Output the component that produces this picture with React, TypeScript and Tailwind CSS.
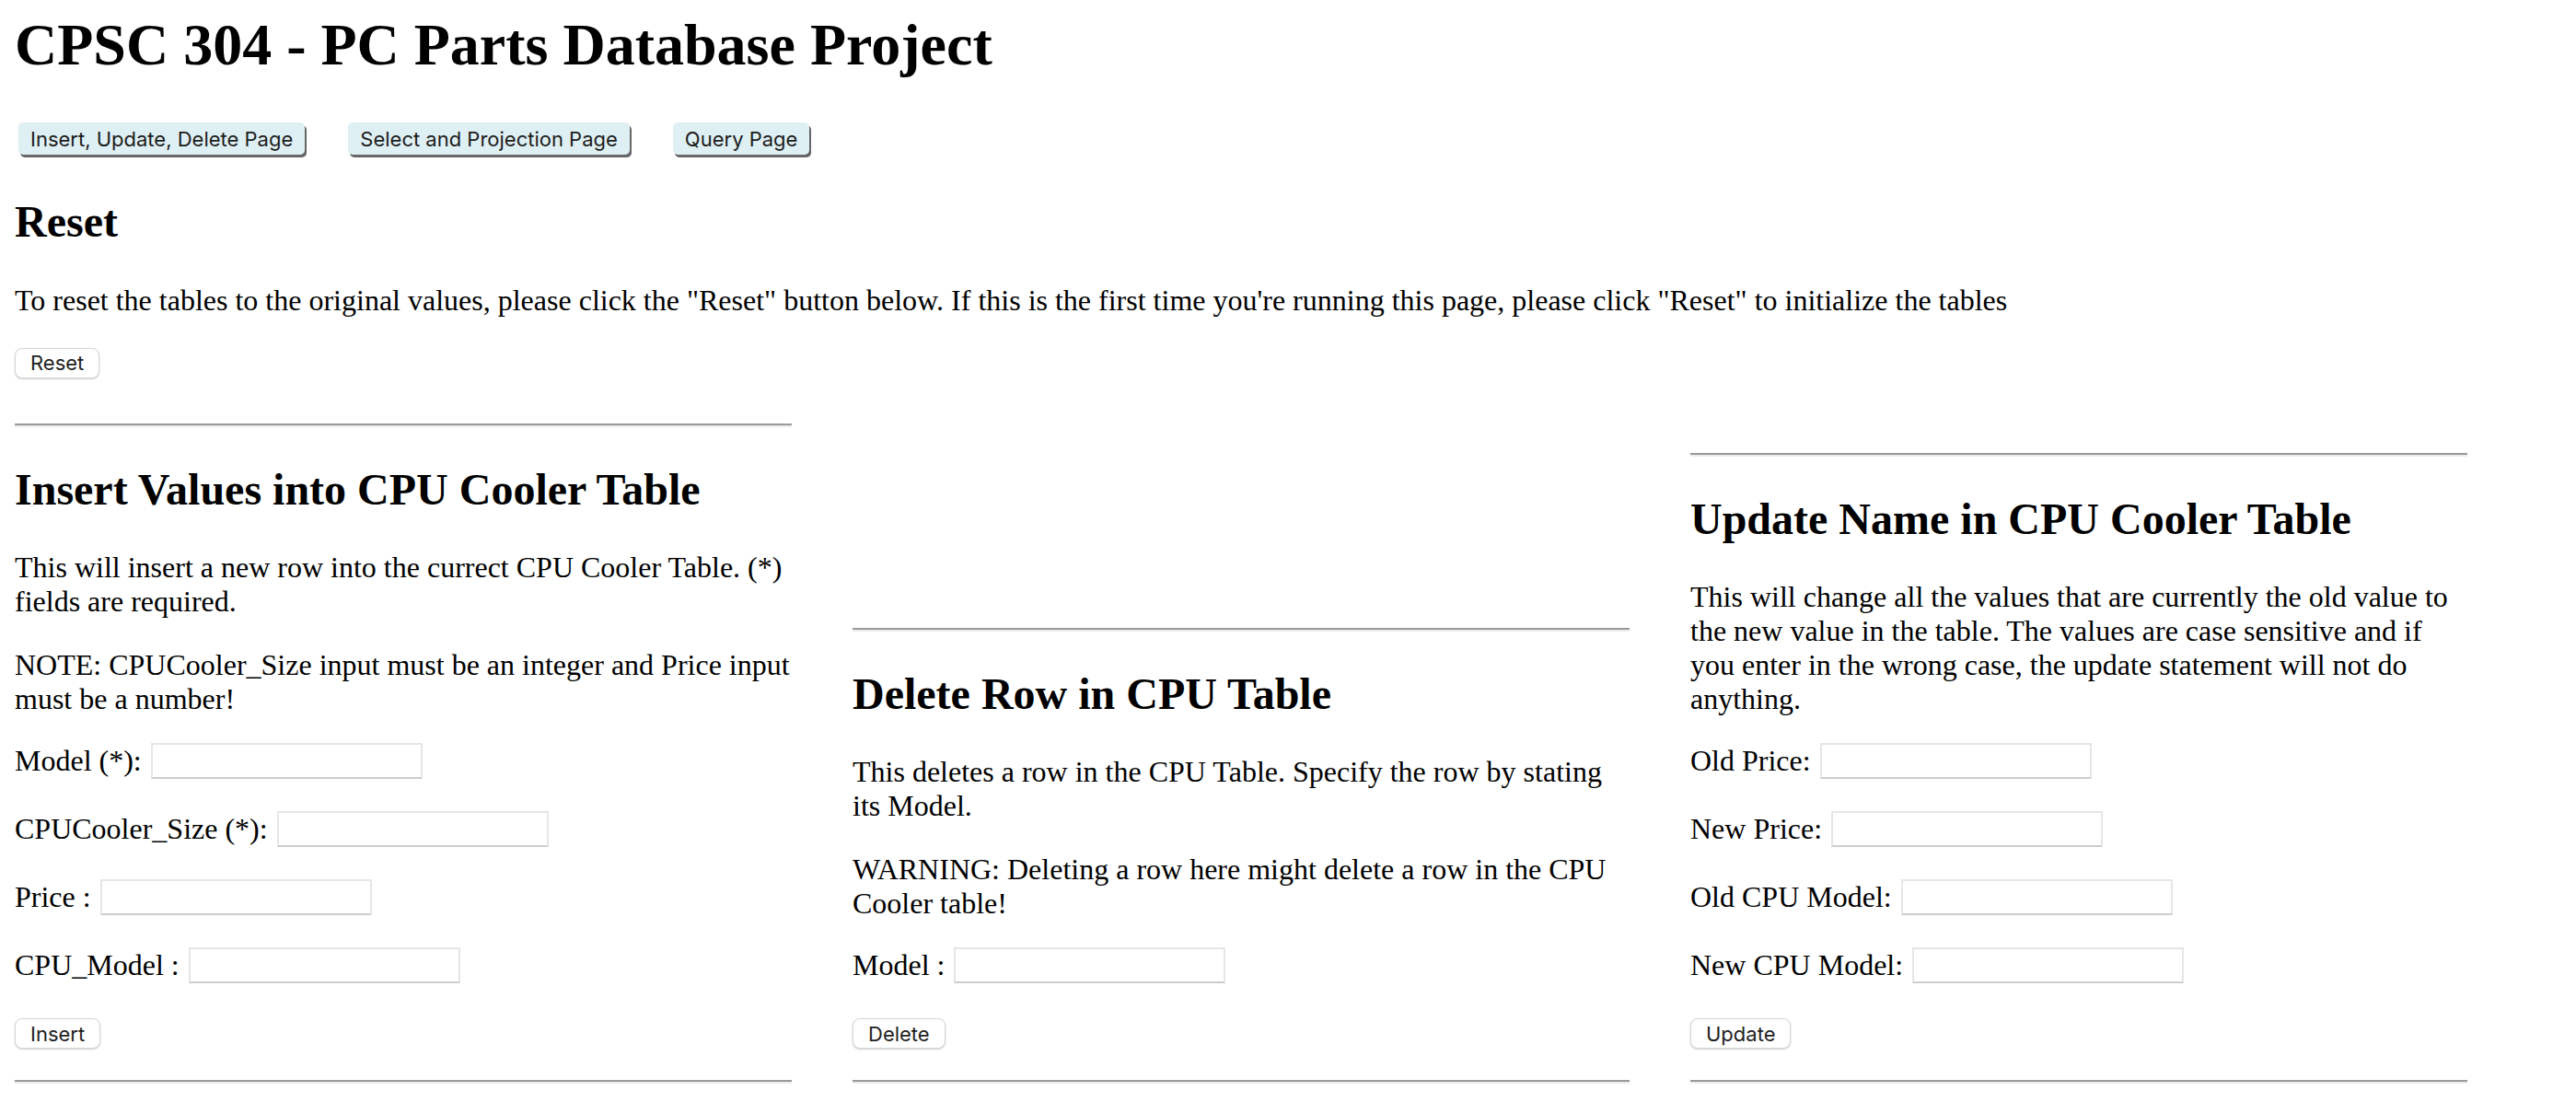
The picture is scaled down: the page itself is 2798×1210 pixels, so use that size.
import { type ReactNode } from "react";

const sans = "font-['Inter','Liberation_Sans',sans-serif]";

function Rule({ className = "" }: { className?: string }) {
  return (
    <hr
      className={`h-0 border-t-2 border-b-2 border-t-[#9a9a9a] border-b-[#ececec] ${className}`}
    />
  );
}

function NavButton({ children }: { children: ReactNode }) {
  return (
    <button
      type="button"
      className={`h-[35px] rounded-[5px] bg-[#dff0f4] px-[13px] text-[22px] leading-none text-[#1c1c1c] shadow-[2px_3px_0_#666] ${sans}`}
    >
      {children}
    </button>
  );
}

function ActionButton({ children }: { children: ReactNode }) {
  return (
    <button
      type="button"
      className={`block h-[33px] rounded-[8px] border border-[#d6d6d6] bg-white px-[16px] text-[22px] leading-none text-[#222] shadow-[0_1px_2px_rgba(0,0,0,0.18)] ${sans}`}
    >
      {children}
    </button>
  );
}

function Field({ label }: { label: string }) {
  return (
    <div className="mt-[27px] mb-[32px] flex h-[42px] items-center gap-[10px]">
      <span>{label}</span>
      <input
        type="text"
        className="h-[39px] w-[295px] border-2 border-[#e6e6e6] border-b-[#cdcdcd] bg-white"
      />
    </div>
  );
}

type Section = {
  title: string;
  paragraphs: string[];
  fields: string[];
  action: string;
};

function Column({ section }: { section: Section }) {
  return (
    <div className="w-[844px] shrink-0">
      <Rule className="my-[16px]" />
      <h2 className="my-[39.84px] text-[48px] font-bold">{section.title}</h2>
      {section.paragraphs.map((p) => (
        <p key={p} className="mt-[32px] mb-[27px]">
          {p}
        </p>
      ))}
      {section.fields.map((f) => (
        <Field key={f} label={f} />
      ))}
      <div className="mt-[37px]">
        <ActionButton>{section.action}</ActionButton>
      </div>
      <Rule className="mt-[34px] mb-[16px]" />
    </div>
  );
}

const sections: Section[] = [
  {
    title: "Insert Values into CPU Cooler Table",
    paragraphs: [
      "This will insert a new row into the currect CPU Cooler Table. (*) fields are required.",
      "NOTE: CPUCooler_Size input must be an integer and Price input must be a number!",
    ],
    fields: ["Model (*):", "CPUCooler_Size (*):", "Price :", "CPU_Model :"],
    action: "Insert",
  },
  {
    title: "Delete Row in CPU Table",
    paragraphs: [
      "This deletes a row in the CPU Table. Specify the row by stating its Model.",
      "WARNING: Deleting a row here might delete a row in the CPU Cooler table!",
    ],
    fields: ["Model :"],
    action: "Delete",
  },
  {
    title: "Update Name in CPU Cooler Table",
    paragraphs: [
      "This will change all the values that are currently the old value to the new value in the table. The values are case sensitive and if you enter in the wrong case, the update statement will not do anything.",
    ],
    fields: ["Old Price:", "New Price:", "Old CPU Model:", "New CPU Model:"],
    action: "Update",
  },
];

export default function App() {
  return (
    <div className="min-h-screen bg-white px-[16px] pt-[12px] font-['Liberation_Serif','Times_New_Roman',serif] text-[32px] leading-[normal] text-black">
      <h1 className="text-[64px] font-bold">CPSC 304 - PC Parts Database Project</h1>

      <div className="mt-[47px] flex gap-[47px] pl-[4px]">
        <NavButton>Insert, Update, Delete Page</NavButton>
        <NavButton>Select and Projection Page</NavButton>
        <NavButton>Query Page</NavButton>
      </div>

      <h2 className="mt-[45px] mb-[39.84px] text-[48px] font-bold">Reset</h2>
      <p>
        To reset the tables to the original values, please click the "Reset" button below. If
        this is the first time you're running this page, please click "Reset" to initialize the
        tables
      </p>
      <div className="mt-[33px]">
        <ActionButton>Reset</ActionButton>
      </div>

      <div className="mt-[33px] flex items-end gap-[66px]">
        {sections.map((s) => (
          <Column key={s.title} section={s} />
        ))}
      </div>
    </div>
  );
}
